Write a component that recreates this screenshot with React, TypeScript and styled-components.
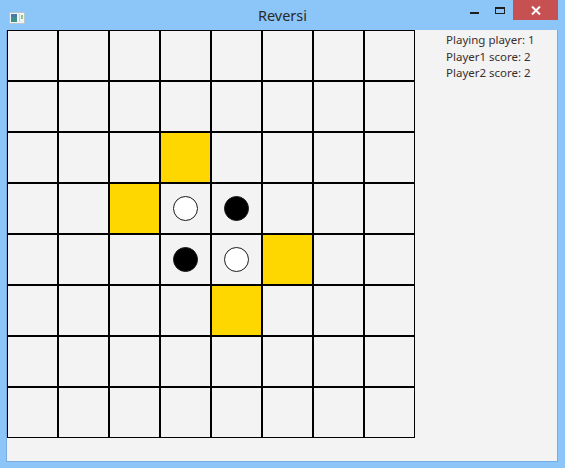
import React from "react";
import styled, { createGlobalStyle } from "styled-components";

const Global = createGlobalStyle`
  html, body { margin: 0; padding: 0; }
  body { width: 565px; height: 468px; overflow: hidden; font-family: "Noto Sans", "Open Sans", sans-serif; }
`;

const Window = styled.div`
  width: 565px;
  height: 468px;
  background: #8cc5f7;
  display: flex;
  flex-direction: column;
  box-sizing: border-box;
`;

const TitleBar = styled.div`
  height: 30px;
  position: relative;
  display: flex;
  align-items: flex-start;
  flex-shrink: 0;
`;

const AppIcon = styled.div`
  margin: 7px 0 0 9px;
  width: 16px;
  height: 12px;
`;

const Title = styled.div`
  position: absolute;
  left: 0;
  right: 0;
  top: 5px;
  text-align: center;
  font-family: "Noto Sans", sans-serif;
  font-size: 14.5px;
  color: #2a2a2a;
  pointer-events: none;
`;

const Controls = styled.div`
  margin-left: auto;
  margin-right: 7px;
  display: flex;
  align-items: flex-start;
`;

const CtlButton = styled.div<{ $w: number; $bg?: string }>`
  width: ${(p) => p.$w}px;
  height: 20px;
  background: ${(p) => p.$bg || "transparent"};
  display: flex;
  align-items: center;
  justify-content: center;
`;

const Client = styled.div`
  margin: 0 7px 0 6px;
  height: 431px;
  border: 1px solid #78ace0;
  border-top: none;
  background: #f3f3f3;
  display: flex;
  align-items: flex-start;
`;

const Board = styled.div`
  display: grid;
  grid-template-columns: repeat(8, 51px);
  grid-template-rows: repeat(8, 51px);
`;

const Cell = styled.div<{ $hint: boolean }>`
  box-sizing: border-box;
  border: 1px solid #000;
  background: ${(p) => (p.$hint ? "#ffd700" : "#f3f3f3")};
  display: flex;
  align-items: center;
  justify-content: center;
`;

const Disc = styled.div<{ $black: boolean }>`
  box-sizing: border-box;
  width: 25px;
  height: 25px;
  border-radius: 50%;
  border: 1px solid #1a1a1a;
  background: ${(p) => (p.$black ? "#000" : "#fff")};
`;

const Status = styled.div`
  padding: 2px 0 0 31px;
  display: flex;
  flex-direction: column;
  font-family: "Noto Sans", sans-serif;
  font-size: 11.5px;
  line-height: 16.5px;
  color: #3a2e2e;
`;

type Piece = "b" | "w" | "h" | ".";
const layout: string[] = [
  "........",
  "........",
  "...h....",
  "..hwb...",
  "...bwh..",
  "....h...",
  "........",
  "........",
];

export default function App() {
  return (
    <Window>
      <Global />
      <TitleBar>
        <AppIcon>
          <svg width="16" height="12" viewBox="0 0 16 12">
            <rect x="0.5" y="0.5" width="15" height="11" fill="#eef3f6" stroke="#b9c6cf" />
            <rect x="2" y="2" width="6" height="8" fill="#3f8f8a" />
            <rect x="2" y="2" width="6" height="3" fill="#4a78a8" />
            <rect x="10" y="2" width="1" height="8" fill="#c5d0d6" />
            <rect x="12" y="3" width="2" height="4" fill="#8fc77f" />
          </svg>
        </AppIcon>
        <Title>Reversi</Title>
        <Controls>
          <CtlButton $w={26}>
            <svg width="26" height="20" viewBox="0 0 26 20">
              <rect x="8" y="12" width="9" height="2" fill="#1e1e1e" />
            </svg>
          </CtlButton>
          <CtlButton $w={25}>
            <svg width="25" height="20" viewBox="0 0 25 20">
              <rect x="7.5" y="7.5" width="9" height="6" fill="none" stroke="#1e1e1e" />
              <rect x="7" y="7" width="10" height="2" fill="#1e1e1e" />
            </svg>
          </CtlButton>
          <CtlButton $w={45} $bg="#c75050">
            <svg width="10" height="9" viewBox="0 0 10 9">
              <path d="M1 0.5 L9 8.5 M9 0.5 L1 8.5" stroke="#fff" strokeWidth="2" />
            </svg>
          </CtlButton>
        </Controls>
      </TitleBar>
      <Client>
        <Board>
          {layout.flatMap((row, r) =>
            row.split("").map((c, i) => {
              const p = c as Piece;
              return (
                <Cell key={`${r}-${i}`} $hint={p === "h"}>
                  {(p === "b" || p === "w") && <Disc $black={p === "b"} />}
                </Cell>
              );
            })
          )}
        </Board>
        <Status>
          <span>Playing player: 1</span>
          <span>Player1 score: 2</span>
          <span>Player2 score: 2</span>
        </Status>
      </Client>
    </Window>
  );
}
